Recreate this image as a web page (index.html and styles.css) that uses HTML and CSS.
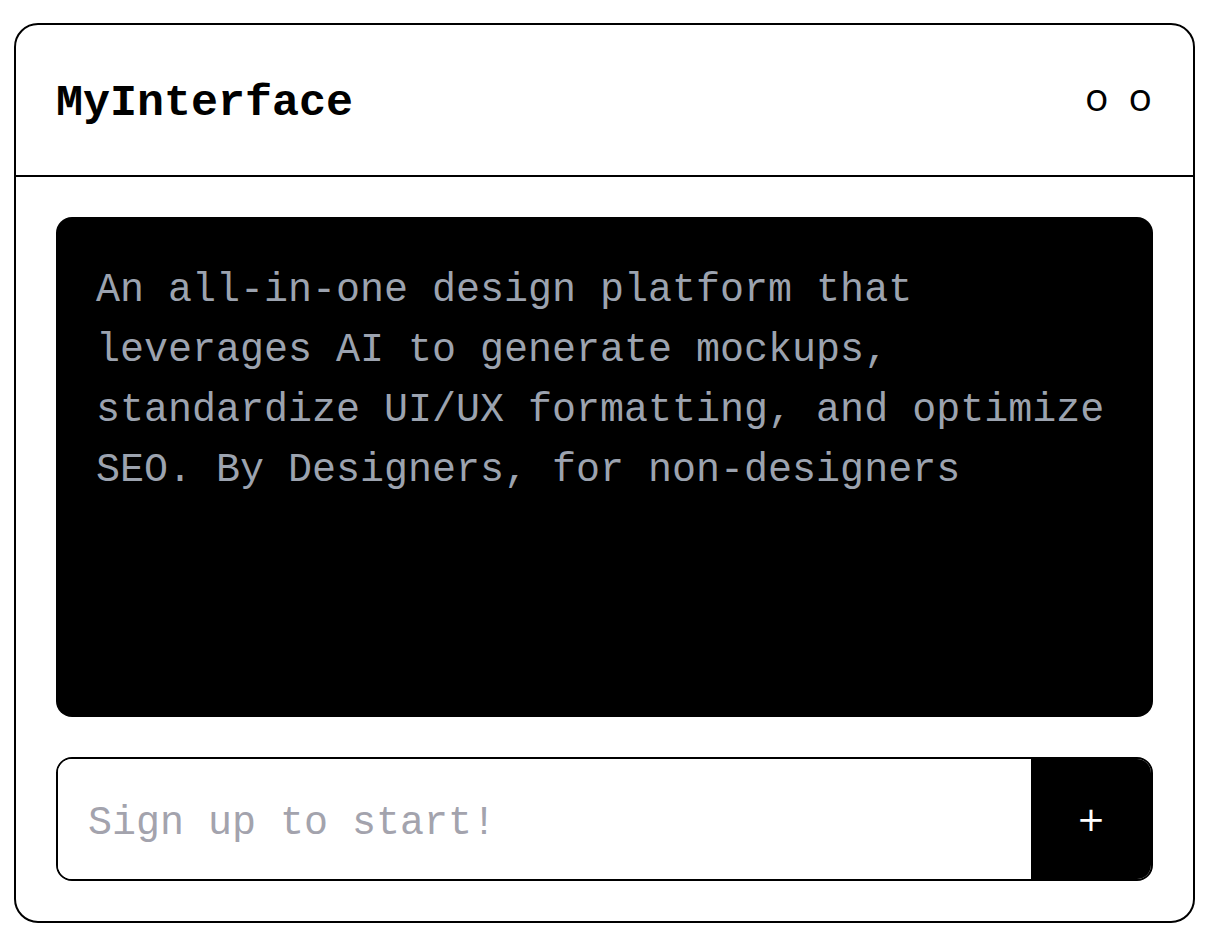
FILE: index.html
```html
<!DOCTYPE html>
<html lang="en">
<head>
<meta charset="utf-8">
<title>MyInterface</title>
<link rel="stylesheet" href="styles.css">
</head>
<body>
<div class="card">
  <header class="header">
    <h1 class="title">MyInterface</h1>
    <div class="controls">
      <span class="ctrl">o</span>
      <span class="ctrl">o</span>
    </div>
  </header>
  <main class="content">
    <section class="screen">
      <p class="desc">An all-in-one design platform that leverages AI to generate mockups, standardize UI/UX formatting, and optimize SEO. By Designers, for non-designers</p>
    </section>
    <form class="signup">
      <input class="field" type="text" placeholder="Sign up to start!">
      <button class="add" type="button">+</button>
    </form>
  </main>
</div>
</body>
</html>
```
FILE: styles.css
```css
html, body {
  margin: 0;
  padding: 0;
  background: #ffffff;
}
body {
  padding: 23px 21px 27px 14px;
  font-family: "Liberation Mono", "DejaVu Sans Mono", monospace;
}
.card {
  box-sizing: border-box;
  width: 1181px;
  height: 900px;
  border: 2px solid #000;
  border-radius: 24px;
  display: flex;
  flex-direction: column;
  overflow: hidden;
}
.header {
  height: 150px;
  border-bottom: 2px solid #000;
  display: flex;
  align-items: center;
  justify-content: space-between;
  padding: 0 40px;
}
.title {
  margin: 0;
  font-family: "Liberation Mono", "DejaVu Sans Mono", monospace;
  font-weight: 700;
  font-size: 45px;
  letter-spacing: 0;
  color: #000;
  padding-top: 7px;
}
.controls {
  display: flex;
  gap: 20px;
  margin-right: 1px;
  padding-bottom: 10px;
}
.ctrl {
  font-family: "Open Sans", "Liberation Sans", sans-serif;
  font-size: 39px;
  line-height: 1;
  color: #000;
}
.content {
  flex: 1;
  padding: 40px;
  display: flex;
  flex-direction: column;
  gap: 40px;
}
.screen {
  box-sizing: border-box;
  height: 500px;
  background: #000;
  border-radius: 16px;
  padding: 44px 40px 40px;
}
.desc {
  margin: 0;
  font-size: 40px;
  line-height: 60px;
  color: #9ca3af;
}
.signup {
  margin: 0;
  box-sizing: border-box;
  height: 124px;
  border: 2px solid #000;
  border-radius: 16px;
  display: flex;
  overflow: hidden;
}
.field {
  flex: 1;
  min-width: 0;
  border: none;
  outline: none;
  background: #fff;
  padding: 8px 30px 0;
  font-family: "Liberation Mono", "DejaVu Sans Mono", monospace;
  font-size: 40px;
  color: #000;
}
.field::placeholder {
  color: #a3a3ad;
}
.add {
  width: 120px;
  border: none;
  background: #000;
  color: #fff;
  font-family: "DejaVu Sans", sans-serif;
  font-size: 34px;
  line-height: 1;
  padding: 0;
  cursor: pointer;
}
```
